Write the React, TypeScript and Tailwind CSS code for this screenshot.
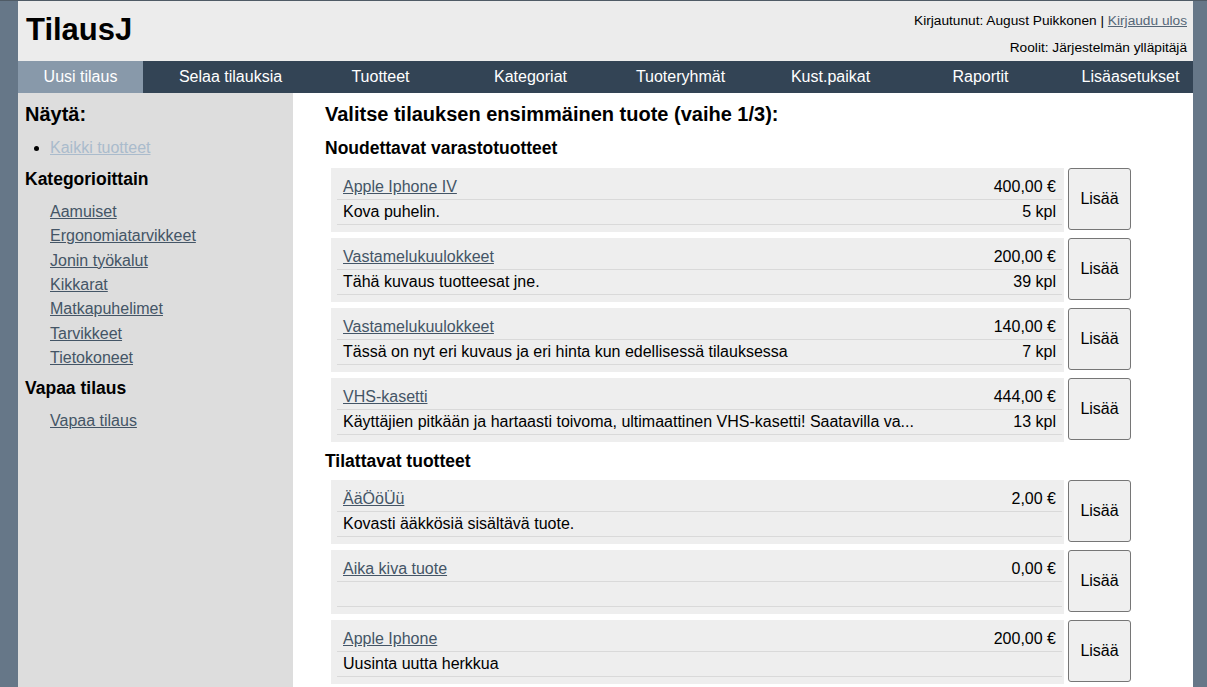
import type { ReactNode } from "react";

type Product = {
  name: string;
  price: string;
  description: string;
  stock?: string;
};

const stockProducts: Product[] = [
  { name: "Apple Iphone IV", price: "400,00 €", description: "Kova puhelin.", stock: "5 kpl" },
  { name: "Vastamelukuulokkeet", price: "200,00 €", description: "Tähä kuvaus tuotteesat jne.", stock: "39 kpl" },
  {
    name: "Vastamelukuulokkeet",
    price: "140,00 €",
    description: "Tässä on nyt eri kuvaus ja eri hinta kun edellisessä tilauksessa",
    stock: "7 kpl",
  },
  {
    name: "VHS-kasetti",
    price: "444,00 €",
    description: "Käyttäjien pitkään ja hartaasti toivoma, ultimaattinen VHS-kasetti! Saatavilla va...",
    stock: "13 kpl",
  },
];

const orderProducts: Product[] = [
  { name: "ÄäÖöÜü", price: "2,00 €", description: "Kovasti ääkkösiä sisältävä tuote." },
  { name: "Aika kiva tuote", price: "0,00 €", description: "" },
  { name: "Apple Iphone", price: "200,00 €", description: "Uusinta uutta herkkua" },
];

const navItems = [
  "Uusi tilaus",
  "Selaa tilauksia",
  "Tuotteet",
  "Kategoriat",
  "Tuoteryhmät",
  "Kust.paikat",
  "Raportit",
  "Lisäasetukset",
];

const categories = [
  "Aamuiset",
  "Ergonomiatarvikkeet",
  "Jonin työkalut",
  "Kikkarat",
  "Matkapuhelimet",
  "Tarvikkeet",
  "Tietokoneet",
];

function SideLink({ children }: { children: ReactNode }) {
  return (
    <a href="#" className="text-[#445566] underline">
      {children}
    </a>
  );
}

function ProductRow({ product }: { product: Product }) {
  return (
    <div className="flex items-start gap-[4px]">
      <div className="w-[733px] bg-[#eeeeee] pl-[6px] pr-[2px] pt-[7px] pb-[7px]">
        <div className="flex h-[25px] items-center justify-between border-b border-[#d9d9d9] px-[6px]">
          <a href="#" className="text-[#445566] underline">
            {product.name}
          </a>
          <span>{product.price}</span>
        </div>
        <div className="flex h-[25px] items-center justify-between border-b border-[#d9d9d9] px-[6px]">
          <span>{product.description}</span>
          <span>{product.stock}</span>
        </div>
      </div>
      <button className="h-[62px] w-[63px] rounded-[3px] border border-[#767676] bg-[#efefef] text-[16px] text-black">
        Lisää
      </button>
    </div>
  );
}

export default function App() {
  return (
    <div
      className="min-h-screen border-t border-[#4f5b66] bg-[#667788] text-[16px] text-black"
      style={{ fontFamily: '"Liberation Sans", Arial, sans-serif' }}
    >
      <div className="mx-[18px] w-[1175px]">
        <header className="flex h-[60px] items-start justify-between bg-[#ececec]">
          <h1 className="pl-[8px] pt-[11px] text-[31px] font-bold leading-[36px]">TilausJ</h1>
          <div className="pr-[6px] pt-[6px] text-right text-[13.7px] leading-[27px]">
            <div>
              Kirjautunut: August Puikkonen |{" "}
              <a href="#" className="text-[#556677] underline">
                Kirjaudu ulos
              </a>
            </div>
            <div>Roolit: Järjestelmän ylläpitäjä</div>
          </div>
        </header>

        <nav className="flex h-[32px] justify-between bg-[#334455]">
          {navItems.map((item, i) => (
            <a
              key={item}
              href="#"
              className={
                i === 0
                  ? "flex w-[125px] items-center justify-center bg-[#8899aa] text-white"
                  : "flex w-[125px] items-center justify-center text-white"
              }
            >
              {item}
            </a>
          ))}
        </nav>

        <div className="flex">
          <aside className="min-h-[594px] w-[275px] shrink-0 bg-[#dddddd] pl-[7px] pt-[9px]">
            <h2 className="text-[20px] font-bold leading-[24px]">Näytä:</h2>
            <ul className="mt-[10px] list-disc pl-[25px] leading-[24px]">
              <li>
                <a href="#" className="text-[#aabbcc] underline">
                  Kaikki tuotteet
                </a>
              </li>
            </ul>
            <h3 className="mt-[8px] text-[17.5px] font-bold leading-[22px]">Kategorioittain</h3>
            <ul className="mt-[10px] pl-[25px] leading-[24.33px]">
              {categories.map((c) => (
                <li key={c}>
                  <SideLink>{c}</SideLink>
                </li>
              ))}
            </ul>
            <h3 className="mt-[7px] text-[17.5px] font-bold leading-[22px]">Vapaa tilaus</h3>
            <ul className="mt-[10px] pl-[25px] leading-[24px]">
              <li>
                <SideLink>Vapaa tilaus</SideLink>
              </li>
            </ul>
          </aside>

          <main className="flex-1 bg-white pl-[32px] pt-[9px] pb-[20px]">
            <h2 className="text-[20px] font-bold leading-[24px]">
              Valitse tilauksen ensimmäinen tuote (vaihe 1/3):
            </h2>
            <h3 className="mt-[11px] text-[17.5px] font-bold leading-[22px]">Noudettavat varastotuotteet</h3>
            <div className="mt-[9px] flex flex-col gap-[6px] pl-[6px]">
              {stockProducts.map((p, i) => (
                <ProductRow key={i} product={p} />
              ))}
            </div>
            <h3 className="mt-[8px] text-[17.5px] font-bold leading-[22px]">Tilattavat tuotteet</h3>
            <div className="mt-[8px] flex flex-col gap-[6px] pl-[6px]">
              {orderProducts.map((p, i) => (
                <ProductRow key={i} product={p} />
              ))}
            </div>
          </main>
        </div>
      </div>
    </div>
  );
}
